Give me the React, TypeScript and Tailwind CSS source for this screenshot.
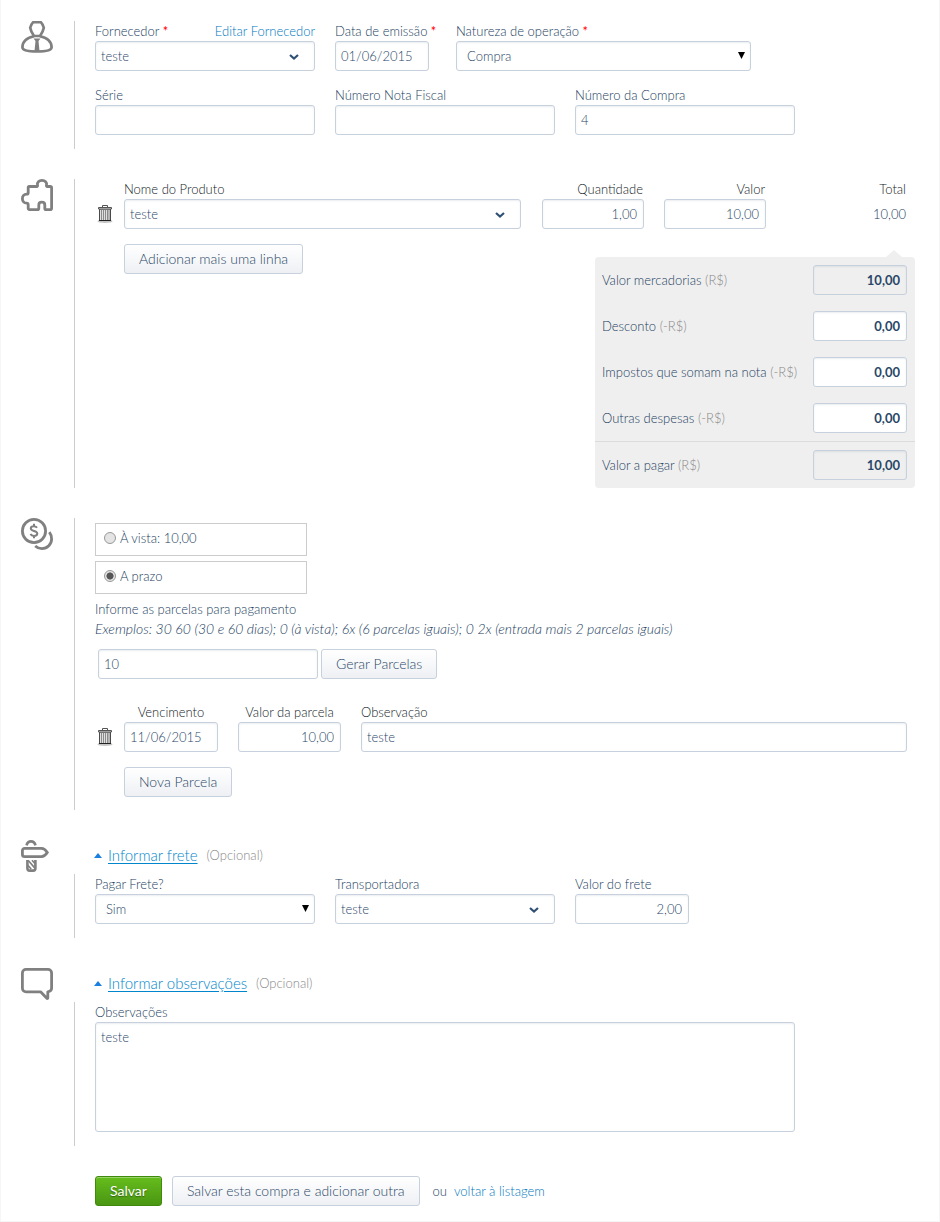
import { useId, useState } from "react";
import type { ComponentProps, ReactNode } from "react";
import clsx from "clsx";

const fieldStyle =
  "h-[30px] rounded-[3px] border border-[#c6d1dd] text-[13px] text-[#2a4767] shadow-[inset_0_1px_2px_rgba(60,80,110,0.10)] outline-none focus:border-[#0086cc]";

const plainButton =
  "h-[30px] rounded-[3px] border border-[#c6d1dd] bg-linear-to-b from-white to-[#eef0f4] px-[14px] text-[14px] text-[#2a4767] whitespace-nowrap";

function PersonIcon() {
  return (
    <svg className="size-8" viewBox="0 0 32 32" fill="none" stroke="#808080" strokeWidth="2.700" strokeLinejoin="round" aria-hidden="true">
      <path d="M12.200 1.200h7.600c1.300 1.400 2.600 3.600 3 5.500-.5 3-2 5.800-3.800 8.300h-6c-1.800-2.500-3.300-5.300-3.800-8.300.4-1.900 1.700-4.100 3-5.500z" />
      <path d="M13 15.200C6 16.800 1.400 20.800 1.400 26.200c0 3 6 4.300 14.600 4.300s14.600-1.300 14.600-4.300c0-5.400-4.600-9.400-11.600-11" />
      <path d="M12.500 17.500h7l-2 2.600 1 9.900h-5l1-9.900z" fill="#808080" stroke="none" />
    </svg>
  );
}

function PuzzleIcon() {
  return (
    <svg className="size-8" viewBox="0 0 32 32" fill="none" stroke="#808080" strokeWidth="2.800" strokeLinejoin="round" aria-hidden="true">
      <path d="M8 7.500h7.700c.8 0 1-.6.800-1.400C15.800 3.600 18 1.400 21 1.400s5.200 2.200 4.500 4.700c-.2.800 0 1.400.8 1.400h2.900c.8 0 1.400.6 1.400 1.400v20.300c0 .8-.6 1.400-1.400 1.400h-4.400c-.8 0-1-.6-1-1.400v-3.200c0-1.700-1.300-2.800-3-2.800s-3 1.100-3 2.800v3.200c0 .8-.4 1.400-1.200 1.400H8.400c-.8 0-1.200-.6-1.200-1.400v-3.500c0-1-.5-1.500-1.500-1.500-2.700 0-4.300-2-4.300-4.500s1.600-4.500 4.300-4.500c1 0 1.500-.5 1.500-1.500V8.300c0-.5.300-.8.800-.8z" />
    </svg>
  );
}

function CoinsIcon() {
  return (
    <svg className="size-8" viewBox="0 0 32 32" fill="none" stroke="#808080" aria-hidden="true">
      <circle cx="13" cy="13" r="11.600" strokeWidth="2.800" />
      <path d="M28.300 14.200c1.500 1.900 2.300 4.300 2.300 6.700 0 5.300-4.300 9.700-9.600 9.700-2.600 0-5-1-6.800-2.700" strokeWidth="2.800" />
      <path d="M16 9.800c-.7-1.100-1.700-1.600-3.200-1.600-1.700 0-3 .8-3 2.300 0 3.300 6.500 1.500 6.500 5 0 1.500-1.400 2.400-3.300 2.400-1.700 0-2.900-.6-3.600-1.800M13 5.800v2.500M13 17.800v2.500" strokeWidth="2" />
    </svg>
  );
}

function SignpostIcon() {
  return (
    <svg className="size-8" viewBox="0 0 32 32" fill="none" stroke="#808080" aria-hidden="true">
      <path d="M5.500 5.300C6.200 2.600 8 1.400 10 1.400s3.800 1.200 4.500 3.900" strokeWidth="2.600" />
      <path d="M3.600 8.400h16.900c2.500 0 4.300 1.700 5.800 4.100-1.500 2.400-3.300 4.100-5.800 4.100H3.600c-1.200 0-2.200-.9-2.200-2.100v-4c0-1.200 1-2.100 2.200-2.100z" strokeWidth="2.800" />
      <path d="M6.400 20v8.300c0 1.400.9 2.300 2.200 2.300h3.600c1.300 0 2.200-.9 2.200-2.300V20" strokeWidth="2.600" />
      <path d="M7 20.200l7.200 8.200M11 20.200l3.400 3.800M6.600 25l3.600 4" strokeWidth="1.700" />
    </svg>
  );
}

function SpeechIcon() {
  return (
    <svg className="size-8" viewBox="0 0 32 32" fill="none" stroke="#808080" strokeWidth="2.800" strokeLinejoin="round" aria-hidden="true">
      <path d="M5 1.400h22c2 0 3.600 1.600 3.600 3.600v15.200c0 2-1.600 3.200-3.800 3.600v6.200c0 .5-.6.700-1 .3l-6.200-6.500H5c-2 0-3.600-1.600-3.600-3.600V5c0-2 1.600-3.600 3.600-3.600z" />
    </svg>
  );
}

function TrashIcon() {
  return (
    <svg className="h-[20px] w-[16px]" viewBox="0 0 16 20" aria-hidden="true">
      <ellipse cx="8" cy="17.300" rx="7.500" ry="1.700" fill="#c4c4c4" />
      <path d="M2.500 5h11v11.500h-11z" fill="#e0e0e0" stroke="#4a4a4a" />
      <path d="M2 16.500h12" stroke="#222" />
      <path d="M4.500 6v10M6.500 6v10M8.500 6v10M10.500 6v10M12 6v10" stroke="#8a8a8a" />
      <path d="M1.500 3.500h13v1.500h-13z" fill="#e8e8e8" stroke="#555" />
      <path d="M5.500 3V1.500h5V3" fill="none" stroke="#555" />
    </svg>
  );
}

function DeleteButton() {
  return (
    <button type="button" aria-label="Excluir" className="ml-[2px] block h-[20px] w-[16px]">
      <TrashIcon />
    </button>
  );
}

function Field({ label, required, aside, className, children }: {
  label: string;
  required?: boolean;
  aside?: ReactNode;
  className?: string;
  children: (id: string) => ReactNode;
}) {
  const id = useId();
  return (
    <div className={clsx("flex flex-col", className)}>
      <div className="flex h-5 justify-between leading-5 whitespace-nowrap">
        <label htmlFor={id}>
          {label}
          {required && <span className="font-normal text-[#f00]"> *</span>}
        </label>
        {aside}
      </div>
      {children(id)}
    </div>
  );
}

function TextInput({ className, ...props }: ComponentProps<"input">) {
  return (
    <input
      type="text"
      className={clsx(fieldStyle, "block w-full min-w-0 bg-white pr-[6px] pl-[5px]", className)}
      {...props}
    />
  );
}

function Combo(props: ComponentProps<"input">) {
  return (
    <div className="relative">
      <TextInput role="combobox" aria-expanded="false" {...props} />
      <svg className="pointer-events-none absolute top-[12px] right-[15px] h-[8px] w-[12px]" viewBox="0 0 12 8" fill="none" aria-hidden="true">
        <path d="M2 2l4 3.500L10 2" stroke="#2f4f73" strokeWidth="2.200" />
      </svg>
    </div>
  );
}

function Picker({ id, options }: { id: string; options: string[] }) {
  return (
    <div className="relative">
      <select id={id} className={clsx(fieldStyle, "block w-full appearance-none bg-white pl-[10px]")}>
        {options.map((option) => (
          <option key={option}>{option}</option>
        ))}
      </select>
      <svg className="pointer-events-none absolute top-[11px] right-[6px] h-[7px] w-[7px]" viewBox="0 0 7 7" aria-hidden="true">
        <path d="M0 0h7L3.500 7z" fill="#000" />
      </svg>
    </div>
  );
}

function Section({ icon, heading, className, children }: {
  icon: ReactNode;
  heading?: string;
  className?: string;
  children: ReactNode;
}) {
  return (
    <section className="flex gap-[21px]">
      <div className="w-8 shrink-0">{icon}</div>
      <div className="min-w-0 flex-1">
        {heading && (
          <div className="flex h-[34px] items-start gap-[9px] pl-[20px] leading-[30px]">
            <a href="#" className="flex items-center text-[15px] text-[#0086cc]">
              <svg className="mr-[6px] h-[5px] w-[8px]" viewBox="0 0 8 5" aria-hidden="true">
                <path d="M4 0l4 5H0z" fill="#1a7fe0" />
              </svg>
              <span className="underline underline-offset-2">{heading}</span>
            </a>
            <span className="text-[13px] text-[#888]">(Opcional)</span>
          </div>
        )}
        <div className={clsx("border-l border-[#ccc] pl-5", className)}>{children}</div>
      </div>
    </section>
  );
}

function TotalRow({ label, unit, value, readOnly }: { label: string; unit: string; value: string; readOnly?: boolean }) {
  const id = useId();
  return (
    <div className="flex items-center justify-between py-2 pr-2 pl-[7px]">
      <label htmlFor={id} className="whitespace-nowrap">
        {label} <span className="text-[#888]">({unit})</span>
      </label>
      <input
        id={id}
        type="text"
        defaultValue={value}
        readOnly={readOnly}
        className={clsx(
          fieldStyle,
          "w-[94px] px-[6px] text-right font-bold",
          readOnly ? "bg-[#efefef]" : "bg-white",
        )}
      />
    </div>
  );
}

function PaymentOption({ label, value, selected, onSelect }: {
  label: string;
  value: string;
  selected: boolean;
  onSelect: (value: string) => void;
}) {
  return (
    <label className="flex h-[33px] w-[212px] items-center gap-[4px] border border-[#ccc] px-2 pb-[3px]">
      <input
        type="radio"
        name="pagamento"
        checked={selected}
        onChange={() => onSelect(value)}
        className="size-[12px] appearance-none rounded-full border border-[#999] bg-[#e4e4e4] bg-radial from-[#e4e4e4] to-[#e4e4e4] checked:from-[#555] checked:from-45% checked:to-[#e4e4e4] checked:to-55%"
      />
      {label}
    </label>
  );
}

export default function App() {
  const [payment, setPayment] = useState("prazo");

  return (
    <form
      onSubmit={(event) => event.preventDefault()}
      className="flex flex-col gap-[30px] border-x border-b border-[#f6f6f6] bg-white pt-[21px] pr-[24px] pb-[15px] pl-[20px] font-['Lato',sans-serif] text-[13px] leading-5 font-light text-[#234060]"
    >
      <Section icon={<PersonIcon />} className="flex flex-col gap-[14px] pb-[14px]">
        <div className="flex">
          <Field
            label="Fornecedor"
            required
            className="mr-5 w-[220px]"
            aside={<a href="#" className="text-[#0078c0]">Editar Fornecedor</a>}
          >
            {(id) => <Combo id={id} defaultValue="teste" />}
          </Field>
          <Field label="Data de emissão" required className="mr-[27px] w-[94px]">
            {(id) => <TextInput id={id} defaultValue="01/06/2015" />}
          </Field>
          <Field label="Natureza de operação" required className="w-[295px]">
            {(id) => <Picker id={id} options={["Compra", "Devolução"]} />}
          </Field>
        </div>
        <div className="flex gap-5">
          <Field label="Série" className="w-[220px]">{(id) => <TextInput id={id} />}</Field>
          <Field label="Número Nota Fiscal" className="w-[220px]">{(id) => <TextInput id={id} />}</Field>
          <Field label="Número da Compra" className="w-[220px]">
            {(id) => <TextInput id={id} defaultValue="4" />}
          </Field>
        </div>
      </Section>

      <Section icon={<PuzzleIcon />}>
        <table className="w-full table-fixed border-collapse">
          <thead className="text-[#141c28]">
            <tr className="h-5">
              <th className="w-[29px] p-0" />
              <th className="p-0 text-left font-light">Nome do Produto</th>
              <th className="w-[123px] p-0 pr-px text-right font-light">Quantidade</th>
              <th className="w-[122px] p-0 pr-px text-right font-light">Valor</th>
              <th className="w-[149px] p-0 pr-[9px] text-right font-light">Total</th>
            </tr>
          </thead>
          <tbody>
            <tr>
              <td className="p-0"><DeleteButton /></td>
              <td className="p-0"><Combo aria-label="Nome do Produto" defaultValue="teste" /></td>
              <td className="p-0 pl-[21px]">
                <TextInput aria-label="Quantidade" defaultValue="1,00" className="text-right" />
              </td>
              <td className="p-0 pl-5">
                <TextInput aria-label="Valor" defaultValue="10,00" className="text-right" />
              </td>
              <td className="p-0 pr-[9px] text-right">10,00</td>
            </tr>
          </tbody>
        </table>
        <div className="flex items-start justify-between pl-[29px]">
          <button type="button" className={clsx(plainButton, "mt-[15px]")}>Adicionar mais uma linha</button>
          <div className="relative mt-[28px] w-[320px] rounded-[4px] bg-[#efefef]">
            <svg className="absolute -top-[7px] right-[13px] h-[7px] w-[16px]" viewBox="0 0 16 7" aria-hidden="true">
              <path d="M8 0l8 7H0z" fill="#efefef" />
            </svg>
            <TotalRow label="Valor mercadorias" unit="R$" value="10,00" readOnly />
            <TotalRow label="Desconto" unit="-R$" value="0,00" />
            <TotalRow label="Impostos que somam na nota" unit="-R$" value="0,00" />
            <TotalRow label="Outras despesas" unit="-R$" value="0,00" />
            <div className="border-t border-[#dcdcdc]">
              <TotalRow label="Valor a pagar" unit="R$" value="10,00" readOnly />
            </div>
          </div>
        </div>
      </Section>

      <Section icon={<CoinsIcon />} className="pt-[5px] pb-[13px]">
        <div className="flex flex-col gap-[5px]">
          <PaymentOption label="À vista: 10,00" value="vista" selected={payment === "vista"} onSelect={setPayment} />
          <PaymentOption label="A prazo" value="prazo" selected={payment === "prazo"} onSelect={setPayment} />
          <div>
            <label htmlFor="parcelas" className="block">Informe as parcelas para pagamento</label>
            <p className="text-[14px] leading-5 italic">
              Exemplos: 30 60 (30 e 60 dias); 0 (à vista); 6x (6 parcelas iguais); 0 2x (entrada mais 2 parcelas iguais)
            </p>
          </div>
        </div>
        <div className="mt-[10px] flex gap-[3px] pl-[3px]">
          <div className="w-[220px]">
            <TextInput id="parcelas" defaultValue="10" />
          </div>
          <button type="button" className={plainButton}>Gerar Parcelas</button>
        </div>
        <table className="mt-[23px] w-full table-fixed border-collapse">
          <thead className="text-[#141c28]">
            <tr className="h-5">
              <th className="w-[29px] p-0" />
              <th className="w-[94px] p-0 text-center font-light">Vencimento</th>
              <th className="w-[123px] p-0 pl-5 text-center font-light">Valor da parcela</th>
              <th className="p-0 pl-5 text-left font-light">Observação</th>
            </tr>
          </thead>
          <tbody>
            <tr>
              <td className="p-0"><DeleteButton /></td>
              <td className="p-0">
                <TextInput aria-label="Vencimento" defaultValue="11/06/2015" />
              </td>
              <td className="p-0 pl-5">
                <TextInput aria-label="Valor da parcela" defaultValue="10,00" className="text-right" />
              </td>
              <td className="p-0 pr-2 pl-5">
                <TextInput aria-label="Observação" defaultValue="teste" />
              </td>
            </tr>
          </tbody>
        </table>
        <button type="button" className={clsx(plainButton, "mt-[15px] ml-[29px] block")}>Nova Parcela</button>
      </Section>

      <Section icon={<SignpostIcon />} heading="Informar frete" className="flex gap-5 pb-[14px]">
        <Field label="Pagar Frete?" className="w-[220px]">
          {(id) => <Picker id={id} options={["Sim", "Não"]} />}
        </Field>
        <Field label="Transportadora" className="w-[220px]">
          {(id) => <Combo id={id} defaultValue="teste" />}
        </Field>
        <Field label="Valor do frete" className="w-[114px]">
          {(id) => <TextInput id={id} defaultValue="2,00" className="text-right" />}
        </Field>
      </Section>

      <Section icon={<SpeechIcon />} heading="Informar observações" className="pb-[14px]">
        <Field label="Observações" className="max-w-[700px]">
          {(id) => (
            <textarea
              id={id}
              defaultValue="teste"
              className="block h-[110px] w-full resize-none rounded-[3px] border border-[#c6d1dd] px-[5px] py-1 text-[#2a4767] shadow-[inset_0_1px_2px_rgba(60,80,110,0.10)] outline-none"
            />
          )}
        </Field>
      </Section>

      <div className="flex items-center pl-[74px]">
        <button
          type="submit"
          className="mr-[10px] h-[30px] rounded-[3px] border border-[#3f8a0c] bg-linear-to-b from-[#66bd1c] to-[#4a9613] px-[14px] text-[14px] font-normal text-white shadow-[inset_0_1px_0_rgba(255,255,255,0.35)] text-shadow-[0_1px_1px_rgba(0,0,0,0.4)]"
        >
          Salvar
        </button>
        <button type="button" className={clsx(plainButton, "mr-[13px]")}>Salvar esta compra e adicionar outra</button>
        <span className="mr-[7px]">ou</span>
        <a href="#" className="text-[#0078c0]">voltar à listagem</a>
      </div>
    </form>
  );
}
